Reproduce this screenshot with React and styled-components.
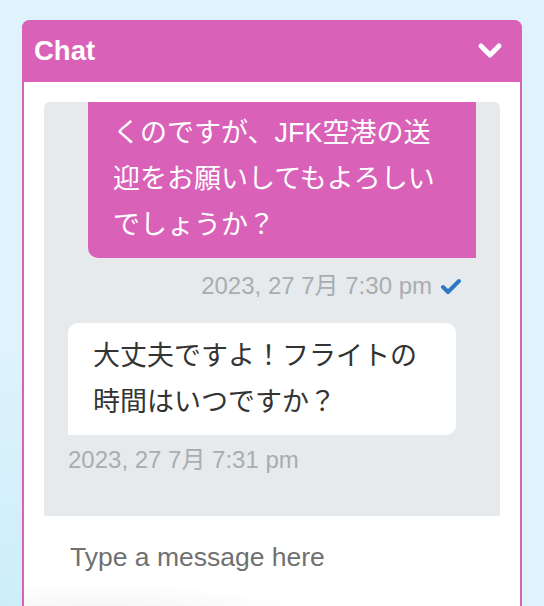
import React from 'react';
import styled, { createGlobalStyle } from 'styled-components';

const GlobalStyle = createGlobalStyle`
  html, body {
    margin: 0;
    height: 100%;
    overflow: hidden;
  }
  body {
    background: radial-gradient(ellipse 60% 45% at 0% 100%, #cdeef8 0%, rgba(223, 243, 253, 0) 100%), #dff3fd;
    font-family: "Liberation Sans", "Noto Sans CJK JP", sans-serif;
  }
`;

const Page = styled.div`
  padding: 20px 22px 0;
  height: 100vh;
  box-sizing: border-box;
`;

const Panel = styled.section`
  width: 500px;
  height: 640px;
  box-sizing: border-box;
  border: 2px solid #d962b8;
  border-top: none;
  border-radius: 8px 8px 0 0;
  background: #fff;
  display: flex;
  flex-direction: column;
`;

const Header = styled.header`
  height: 62px;
  flex-shrink: 0;
  margin: 0 -2px;
  padding: 0 19px 0 12px;
  background: #d962b8;
  border-radius: 8px 8px 0 0;
  display: flex;
  align-items: center;
  justify-content: space-between;
`;

const Title = styled.h2`
  margin: 0;
  color: #fff;
  font-size: 27.5px;
  font-weight: 700;
`;

const Toggle = styled.button`
  border: none;
  background: none;
  padding: 0;
  display: flex;
  cursor: pointer;
`;

const Body = styled.div`
  padding: 20px 20px 0;
  display: flex;
  flex-direction: column;
`;

const Messages = styled.div`
  height: 414px;
  background: #e6eaec;
  border-radius: 6px 6px 0 0;
  overflow: hidden;
  padding: 0 24px 43px;
  box-sizing: border-box;
  display: flex;
  flex-direction: column;
  justify-content: flex-end;
`;

const Bubble = styled.div`
  flex-shrink: 0;
  max-width: 388px;
  box-sizing: border-box;
  padding: 10px 25px;
  font-size: 27px;
  line-height: 46px;
  align-self: ${p => (p.$mine ? 'flex-end' : 'flex-start')};
  background: ${p => (p.$mine ? '#d962b8' : '#fff')};
  color: ${p => (p.$mine ? '#fff' : '#333')};
  border-radius: ${p => (p.$mine ? '10px 10px 0 10px' : '10px 10px 10px 0')};
`;

const Meta = styled.div`
  flex-shrink: 0;
  display: flex;
  align-items: center;
  gap: 8px;
  justify-content: ${p => (p.$mine ? 'flex-end' : 'flex-start')};
  margin: ${p => (p.$mine ? '15px 14px 24px 0' : '12px 0 0')};
  color: #a9adb0;
  font-size: 24px;
  line-height: 26px;
`;

const Input = styled.input`
  height: 82px;
  border: none;
  outline: none;
  padding: 0 26px;
  background: transparent;
  font-family: inherit;
  font-size: 26.5px;
  color: #333;
  &::placeholder {
    color: #707070;
  }
`;

const Composer = styled.div`
  margin: 0 -20px;
  padding: 0 20px;
  height: 120px;
  background: radial-gradient(ellipse 50% 45% at 15% 100%, rgba(0, 0, 0, 0.08) 0%, rgba(0, 0, 0, 0) 100%);
`;

const Chevron = () => (
  <svg width="26" height="18" viewBox="0 0 26 18">
    <polyline points="4,4 13,13 22,4" fill="none" stroke="#fff" strokeWidth="5" strokeLinecap="round" strokeLinejoin="round" />
  </svg>
);

const Check = () => (
  <svg width="22" height="17" viewBox="0 0 22 17">
    <polyline points="3,9 8,14 19,3" fill="none" stroke="#2b77c2" strokeWidth="4" strokeLinecap="round" strokeLinejoin="round" />
  </svg>
);

export default function App() {
  return (
    <>
      <GlobalStyle />
      <Page>
        <Panel>
          <Header>
            <Title>Chat</Title>
            <Toggle aria-label="collapse">
              <Chevron />
            </Toggle>
          </Header>
          <Body>
            <Messages>
              <Bubble $mine>来週末、ニューヨークに行くのですが、JFK空港の送迎をお願いしてもよろしいでしょうか？</Bubble>
              <Meta $mine>
                2023, 27 7月 7:30 pm
                <Check />
              </Meta>
              <Bubble>大丈夫ですよ！フライトの時間はいつですか？</Bubble>
              <Meta>2023, 27 7月 7:31 pm</Meta>
            </Messages>
            <Composer>
              <Input placeholder="Type a message here" />
            </Composer>
          </Body>
        </Panel>
      </Page>
    </>
  );
}
